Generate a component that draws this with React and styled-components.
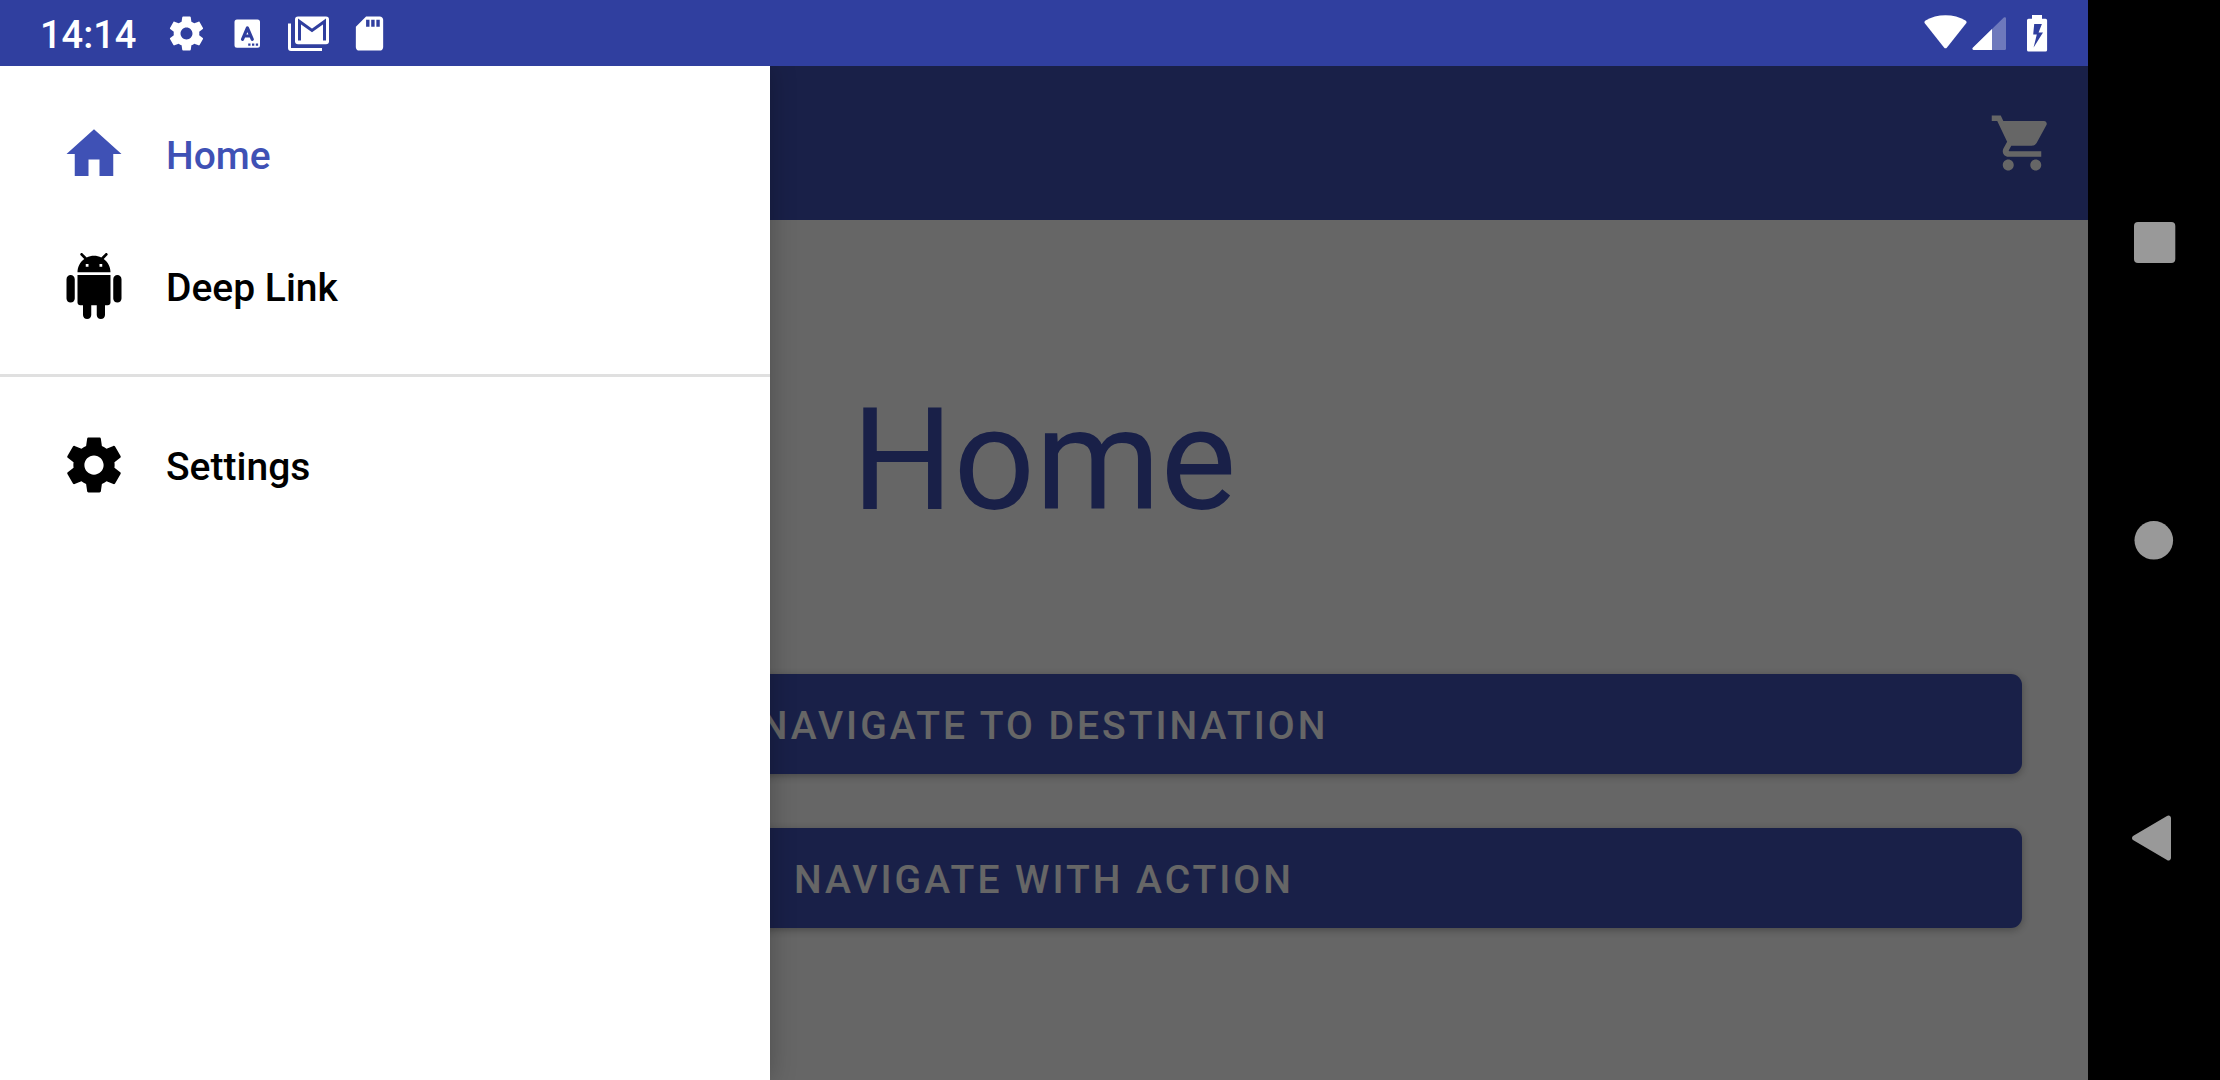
import React from "react";
import styled, { createGlobalStyle } from "styled-components";

const colors = {
  primary: "#3f51b5",
  primaryDark: "#303f9f",
  scrim: "rgba(0, 0, 0, 0.6)",
  divider: "#e0e0e0",
  navGlyph: "#999999",
};

const GlobalStyle = createGlobalStyle`
  *, *::before, *::after { box-sizing: border-box; }
  html, body, #root { height: 100%; }
  body {
    margin: 0;
    background: #000;
    font-family: Roboto, "Liberation Sans", sans-serif;
  }
`;

const Device = styled.div`
  display: flex;
  height: 100%;
  overflow: hidden;
`;

const Screen = styled.div`
  flex: 1;
  min-width: 0;
  display: flex;
  flex-direction: column;
`;

const StatusBar = styled.header`
  display: flex;
  align-items: center;
  flex: none;
  height: 66px;
  padding: 0 31px 0 40px;
  background: ${colors.primaryDark};
  color: #fff;
`;

const Clock = styled.time`
  padding-top: 4px;
  font-size: 38px;
  line-height: 46px;
  font-weight: 500;
  margin-right: 30px;
`;

const Notifications = styled.div`
  display: flex;
  align-items: center;
  gap: 20px;
  margin-right: auto;
`;

const SystemIcons = styled.div`
  display: flex;
  align-items: center;
  gap: 1px;
`;

const Icon = styled.svg`
  display: block;
  flex: none;
  width: ${(p) => p.$size}px;
  height: ${(p) => p.$size}px;
  fill: currentColor;
`;

const AppArea = styled.div`
  position: relative;
  flex: 1;
  min-height: 0;
  display: flex;
  flex-direction: column;
  overflow: hidden;
`;

const AppBar = styled.div`
  display: flex;
  align-items: center;
  justify-content: flex-end;
  flex: none;
  height: 154px;
  padding: 0 33px;
  background: ${colors.primary};
  color: #fff;
`;

const IconButton = styled.button`
  padding: 0;
  border: 0;
  background: none;
  color: inherit;
`;

const Page = styled.main`
  flex: 1;
  display: flex;
  flex-direction: column;
  align-items: stretch;
  gap: 54px;
  padding: 155px 66px 66px;
  background: #fff;
`;

const Title = styled.h1`
  margin: 0 0 75px;
  font-size: 143px;
  line-height: 170px;
  font-weight: 400;
  text-align: center;
  color: ${colors.primary};
`;

const ActionButton = styled.button`
  height: 100px;
  padding: 4px 44px 0;
  border: 0;
  border-radius: 11px;
  background: ${colors.primary};
  color: #fff;
  font-family: inherit;
  font-size: 39px;
  line-height: 46px;
  font-weight: 500;
  letter-spacing: 3px;
  text-transform: uppercase;
  box-shadow: 0 2px 8px rgba(0, 0, 0, 0.3);
`;

const Scrim = styled.div`
  position: absolute;
  inset: 0;
  background: ${colors.scrim};
`;

const Drawer = styled.nav`
  position: absolute;
  top: 0;
  bottom: 0;
  left: 0;
  width: 770px;
  padding: 22px 0;
  background: #fff;
  box-shadow: 0 0 24px rgba(0, 0, 0, 0.25);
`;

const DrawerLink = styled.a`
  display: flex;
  align-items: center;
  gap: 39px;
  height: 132px;
  padding: 0 61px;
  color: ${(p) => (p.$active ? colors.primary : "#000")};
  text-decoration: none;
`;

const DrawerLabel = styled.span`
  padding-top: 4px;
  font-size: 39px;
  line-height: 46px;
  font-weight: 500;
`;

const Divider = styled.hr`
  height: 3px;
  margin: 22px 0;
  border: 0;
  background: ${colors.divider};
`;

const NavBar = styled.aside`
  display: flex;
  flex-direction: column;
  align-items: center;
  justify-content: space-between;
  flex: none;
  width: 132px;
  padding: 209px 0;
  background: #000;
  color: ${colors.navGlyph};
`;

const GEAR =
  "M19.43 12.98c.04-.32.07-.64.07-.98s-.03-.66-.07-.98l2.11-1.65c.19-.15.24-.42.12-.64l-2-3.46c-.12-.22-.39-.3-.61-.22l-2.49 1c-.52-.4-1.08-.73-1.69-.98l-.38-2.65C14.46 2.18 14.25 2 14 2h-4c-.25 0-.46.18-.49.42l-.38 2.65c-.61.25-1.17.59-1.69.98l-2.49-1c-.23-.09-.49 0-.61.22l-2 3.46c-.13.22-.07.49.12.64l2.11 1.65c-.04.32-.07.65-.07.98s.03.66.07.98l-2.11 1.65c-.19.15-.24.42-.12.64l2 3.46c.12.22.39.3.61.22l2.49-1c.52.4 1.08.73 1.69.98l.38 2.65c.03.24.24.42.49.42h4c.25 0 .46-.18.49-.42l.38-2.65c.61-.25 1.17-.59 1.69-.98l2.49 1c.23.09.49 0 .61-.22l2-3.46c.12-.22.07-.49-.12-.64l-2.11-1.65zM12 15.5c-1.93 0-3.5-1.57-3.5-3.5s1.57-3.5 3.5-3.5 3.5 1.57 3.5 3.5-1.57 3.5-3.5 3.5z";
const HOME = "M10 20v-6h4v6h5v-8h3L12 3 2 12h3v8z";
const ANDROID =
  "M6 18c0 .55.45 1 1 1h1v3.5c0 .83.67 1.5 1.5 1.5s1.5-.67 1.5-1.5V19h2v3.5c0 .83.67 1.5 1.5 1.5s1.5-.67 1.5-1.5V19h1c.55 0 1-.45 1-1V8H6v10zM3.5 8C2.67 8 2 8.67 2 9.5v7c0 .83.67 1.5 1.5 1.5S5 17.33 5 16.5v-7C5 8.67 4.33 8 3.5 8zm17 0c-.83 0-1.5.67-1.5 1.5v7c0 .83.67 1.5 1.5 1.5s1.5-.67 1.5-1.5v-7c0-.83-.67-1.5-1.5-1.5zm-4.97-5.84l1.3-1.3c.2-.2.2-.51 0-.71-.2-.2-.51-.2-.71 0l-1.48 1.48C13.85 1.23 12.95 1 12 1c-.96 0-1.86.23-2.66.63L7.85.15c-.2-.2-.51-.2-.71 0-.2.2-.2.51 0 .71l1.31 1.31C6.97 3.26 6 5.01 6 7h12c0-1.99-.97-3.75-2.47-4.84zM10 5H9V4h1v1zm5 0h-1V4h1v1z";
const CART =
  "M7 18c-1.1 0-1.99.9-1.99 2S5.9 22 7 22s2-.9 2-2-.9-2-2-2zM1 2v2h2l3.6 7.59-1.35 2.45c-.16.28-.25.61-.25.96 0 1.1.9 2 2 2h12v-2H7.42c-.14 0-.25-.11-.25-.25l.03-.12.9-1.63h7.45c.75 0 1.41-.41 1.75-1.03l3.58-6.49c.08-.14.12-.31.12-.48 0-.55-.45-1-1-1H5.21l-.94-2H1zm16 16c-1.1 0-1.99.9-1.99 2s.89 2 1.99 2 2-.9 2-2-.9-2-2-2z";
const SD_CARD =
  "M18 2h-8L4.02 8 4 20c0 1.1.9 2 2 2h12c1.1 0 2-.9 2-2V4c0-1.1-.9-2-2-2zm-6 6h-2V4h2v4zm3 0h-2V4h2v4zm3 0h-2V4h2v4z";

function Glyph({ path, size = 66 }) {
  return (
    <Icon $size={size} viewBox="0 0 24 24" aria-hidden="true">
      <path d={path} />
    </Icon>
  );
}

function KeyboardIcon() {
  return (
    <Icon $size={41} viewBox="0 0 41 41" aria-hidden="true">
      <path
        fillRule="evenodd"
        d="M10 6.500h20.500a2.500 2.500 0 0 1 2.500 2.500v23.300a2.500 2.500 0 0 1-2.500 2.500H10a2.500 2.500 0 0 1-2.500-2.500V9a2.500 2.500 0 0 1 2.500-2.500zM21.200 32.700h2.300v-2.300h-2.300zM25 32.700h2.300v-2.300H25zM28.800 32.700h2.300v-2.300h-2.300z"
      />
      <path
        d="M15.500 26.300l4.900-11.300 4.900 11.300M17.500 23h6"
        fill="none"
        stroke={colors.primaryDark}
        strokeWidth="3.200"
        strokeLinecap="round"
        strokeLinejoin="round"
      />
    </Icon>
  );
}

function MailIcon() {
  return (
    <Icon $size={41} viewBox="0 0 41 41" aria-hidden="true">
      <path d="M0 10.500h3V35h31v3H3a3 3 0 0 1-3-3z" />
      <rect x="7" y="3.500" width="34" height="27.700" rx="3" />
      <path
        d="M11.500 27.500V8.500L24 17.500 36.500 8.500V27.500"
        fill="none"
        stroke={colors.primaryDark}
        strokeWidth="3"
      />
    </Icon>
  );
}

function WifiIcon() {
  return (
    <Icon $size={44} viewBox="0 0 44 44" aria-hidden="true">
      <path d="M2 12.500a2 2 0 0 1 .5-2.900C8.500 6 15 4.300 22.500 4.300s14 1.700 20 5.300a2 2 0 0 1 .5 2.900L24 36.500a2 2 0 0 1-3 0z" />
    </Icon>
  );
}

function SignalIcon() {
  return (
    <Icon $size={44} viewBox="0 0 44 44" aria-hidden="true">
      <path
        opacity="0.300"
        d="M5.800 39a1.300 1.300 0 0 1-1-2.200L35.800 6.600a1.300 1.300 0 0 1 2.200 1v30.100a1.300 1.300 0 0 1-1.300 1.300z"
      />
      <path d="M5.800 39a1.300 1.300 0 0 1-1-2.200L24 18.100V39z" />
    </Icon>
  );
}

function BatteryIcon() {
  return (
    <Icon $size={44} viewBox="0 0 44 44" aria-hidden="true">
      <path
        transform="translate(2 1)"
        fillRule="evenodd"
        d="M17 3h10v3.700h3.500a1.600 1.600 0 0 1 1.600 1.600v29.600a1.600 1.600 0 0 1-1.600 1.600H13.600a1.600 1.600 0 0 1-1.600-1.600V8.300a1.600 1.600 0 0 1 1.600-1.600H17zM19.200 12l-1 10.600h3.600l-3.200 12.900 9.400-15h-4.400l3.300-8.500z"
      />
    </Icon>
  );
}

export default function App() {
  return (
    <>
      <GlobalStyle />
      <Device>
        <Screen>
          <StatusBar>
            <Clock>14:14</Clock>
            <Notifications>
              <Glyph path={GEAR} size={41} />
              <KeyboardIcon />
              <MailIcon />
              <Glyph path={SD_CARD} size={41} />
            </Notifications>
            <SystemIcons>
              <WifiIcon />
              <SignalIcon />
              <BatteryIcon />
            </SystemIcons>
          </StatusBar>
          <AppArea>
            <AppBar>
              <IconButton type="button" aria-label="Cart">
                <Glyph path={CART} />
              </IconButton>
            </AppBar>
            <Page>
              <Title>Home</Title>
              <ActionButton type="button">Navigate to Destination</ActionButton>
              <ActionButton type="button">Navigate with Action</ActionButton>
            </Page>
            <Scrim />
            <Drawer aria-label="Main">
              <DrawerLink href="#home" $active aria-current="page">
                <Glyph path={HOME} />
                <DrawerLabel>Home</DrawerLabel>
              </DrawerLink>
              <DrawerLink href="#deep-link">
                <Glyph path={ANDROID} />
                <DrawerLabel>Deep Link</DrawerLabel>
              </DrawerLink>
              <Divider />
              <DrawerLink href="#settings">
                <Glyph path={GEAR} />
                <DrawerLabel>Settings</DrawerLabel>
              </DrawerLink>
            </Drawer>
          </AppArea>
        </Screen>
        <NavBar>
          <IconButton type="button" aria-label="Overview">
            <Icon $size={66} viewBox="0 0 66 66" aria-hidden="true">
              <rect x="13" y="13" width="41.300" height="41" rx="4" />
            </Icon>
          </IconButton>
          <IconButton type="button" aria-label="Go to home screen">
            <Icon $size={66} viewBox="0 0 66 66" aria-hidden="true">
              <circle cx="32.800" cy="33.300" r="19.300" />
            </Icon>
          </IconButton>
          <IconButton type="button" aria-label="Back">
            <Icon $size={66} viewBox="0 0 66 66" aria-hidden="true">
              <path d="M12 31a2.500 2.500 0 0 0 0 4L46 55a2.500 2.500 0 0 0 4-2V13a2.500 2.500 0 0 0-4-2z" />
            </Icon>
          </IconButton>
        </NavBar>
      </Device>
    </>
  );
}
